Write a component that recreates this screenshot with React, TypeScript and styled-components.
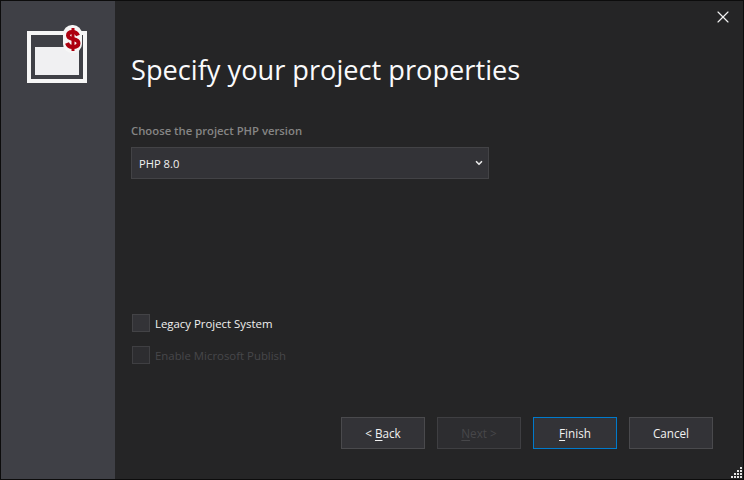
import React from "react";
import styled, { createGlobalStyle } from "styled-components";
import { ChevronDown, X } from "lucide-react";

const Global = createGlobalStyle`
  html, body { margin: 0; padding: 0; background: #000; }
  body { font-family: "Open Sans", "Noto Sans", sans-serif; }
`;

const Dialog = styled.div`
  box-sizing: border-box;
  position: relative;
  width: 744px;
  height: 480px;
  border: 1px solid #0c0c0c;
  display: flex;
  background: #252526;
  overflow: hidden;
`;

const Sidebar = styled.aside`
  box-sizing: border-box;
  width: 114px;
  flex: none;
  padding: 24px 0 0 26px;
  background: #3f4046;
`;

const Main = styled.main`
  flex: 1;
  display: flex;
  flex-direction: column;
  padding: 0 30px 30px 16px;
`;

const Title = styled.h1`
  margin: 51px 0 0;
  height: 36px;
  font-size: 27.2px;
  line-height: 36px;
  font-weight: 500;
  color: #fafafc;
`;

const FieldLabel = styled.label`
  display: block;
  margin-top: 34px;
  height: 18px;
  font-size: 11.3px;
  line-height: 18px;
  font-weight: 600;
  color: #858585;
`;

const Select = styled.div`
  box-sizing: border-box;
  width: 358px;
  height: 32px;
  margin-top: 7px;
  padding: 0 4px 0 7px;
  display: flex;
  align-items: center;
  justify-content: space-between;
  background: #333337;
  border: 1px solid #434346;
  font-size: 11.2px;
  color: #f1f1f1;
`;

const Options = styled.div`
  margin-top: 135px;
  padding-left: 1px;
  display: flex;
  flex-direction: column;
  gap: 14px;
`;

const CheckRow = styled.div<{ $off?: boolean }>`
  display: flex;
  align-items: center;
  gap: 5px;
  height: 18px;
  font-size: 11.4px;
  color: ${(p) => (p.$off ? "#47474a" : "#f1f1f1")};
`;

const Box = styled.span<{ $off?: boolean }>`
  box-sizing: border-box;
  width: 18px;
  height: 18px;
  background: ${(p) => (p.$off ? "#2d2d30" : "#333337")};
  border: 1px solid ${(p) => (p.$off ? "#3f3f42" : "#434346")};
`;

const Footer = styled.div`
  margin-top: auto;
  display: flex;
  justify-content: flex-end;
  gap: 12px;
`;

const Button = styled.button<{ $focus?: boolean }>`
  box-sizing: border-box;
  width: 84px;
  height: 32px;
  padding: 0 0 1px;
  background: ${(p) => (p.disabled ? "#2d2d30" : "#333337")};
  border: 1px solid ${(p) => (p.$focus ? "#007acc" : p.disabled ? "#3f3f42" : "#4a4a4d")};
  color: ${(p) => (p.disabled ? "#47474a" : "#f1f1f1")};
  font-family: inherit;
  font-size: 11.7px;
  u { text-underline-offset: 2px; }
`;

const Close = styled.button`
  position: absolute;
  top: 6px;
  right: 10px;
  width: 20px;
  height: 20px;
  padding: 0;
  display: flex;
  background: none;
  border: 0;
  color: #f1f1f1;
`;

const Grip = styled.svg`
  position: absolute;
  right: 1px;
  bottom: 1px;
`;

function Logo() {
  return (
    <svg width="60" height="58" viewBox="0 0 60 58">
      <rect x="2" y="8" width="56" height="48" fill="none" stroke="#f6f6f6" strokeWidth="4" />
      <rect x="8" y="22" width="44" height="28" fill="#f0f0f2" />
      <rect x="36" y="0" width="19" height="28" rx="9" fill="#f6f6f6" />
      <path
        d="M51 10.5C50 8 48.5 7 45.5 7C42.5 7 41 8.5 41 10.5C41 15.5 51.5 12.5 51.5 18.2C51.5 20.6 49.5 22 45.5 22C43 22 41 21 40 18"
        fill="none"
        stroke="#ad0010"
        strokeWidth="4"
      />
      <path d="M46 3V26" stroke="#ad0010" strokeWidth="3" />
    </svg>
  );
}

const gripDots = [
  [10, 0],
  [7, 3],
  [10, 3],
  [4, 6],
  [7, 6],
  [10, 6],
  [1, 9],
  [4, 9],
  [7, 9],
  [10, 9],
];

export default function App() {
  return (
    <>
      <Global />
      <Dialog>
        <Sidebar>
          <Logo />
        </Sidebar>
        <Main>
          <Title>Specify your project properties</Title>
          <FieldLabel>Choose the project PHP version</FieldLabel>
          <Select>
            PHP 8.0
            <ChevronDown size={10} strokeWidth={4} color="#e8e8e8" />
          </Select>
          <Options>
            <CheckRow>
              <Box />
              Legacy Project System
            </CheckRow>
            <CheckRow $off>
              <Box $off />
              Enable Microsoft Publish
            </CheckRow>
          </Options>
          <Footer>
            <Button>
              &lt; <u>B</u>ack
            </Button>
            <Button disabled>
              <u>N</u>ext &gt;
            </Button>
            <Button $focus>
              <u>F</u>inish
            </Button>
            <Button>Cancel</Button>
          </Footer>
        </Main>
        <Close aria-label="Close">
          <X size={20} strokeWidth={1.4} />
        </Close>
        <Grip width="12" height="11" viewBox="0 0 12 11">
          {gripDots.map(([x, y]) => (
            <rect key={`${x}-${y}`} x={x} y={y} width="2" height="2" fill="#e4e4e4" />
          ))}
        </Grip>
      </Dialog>
    </>
  );
}
